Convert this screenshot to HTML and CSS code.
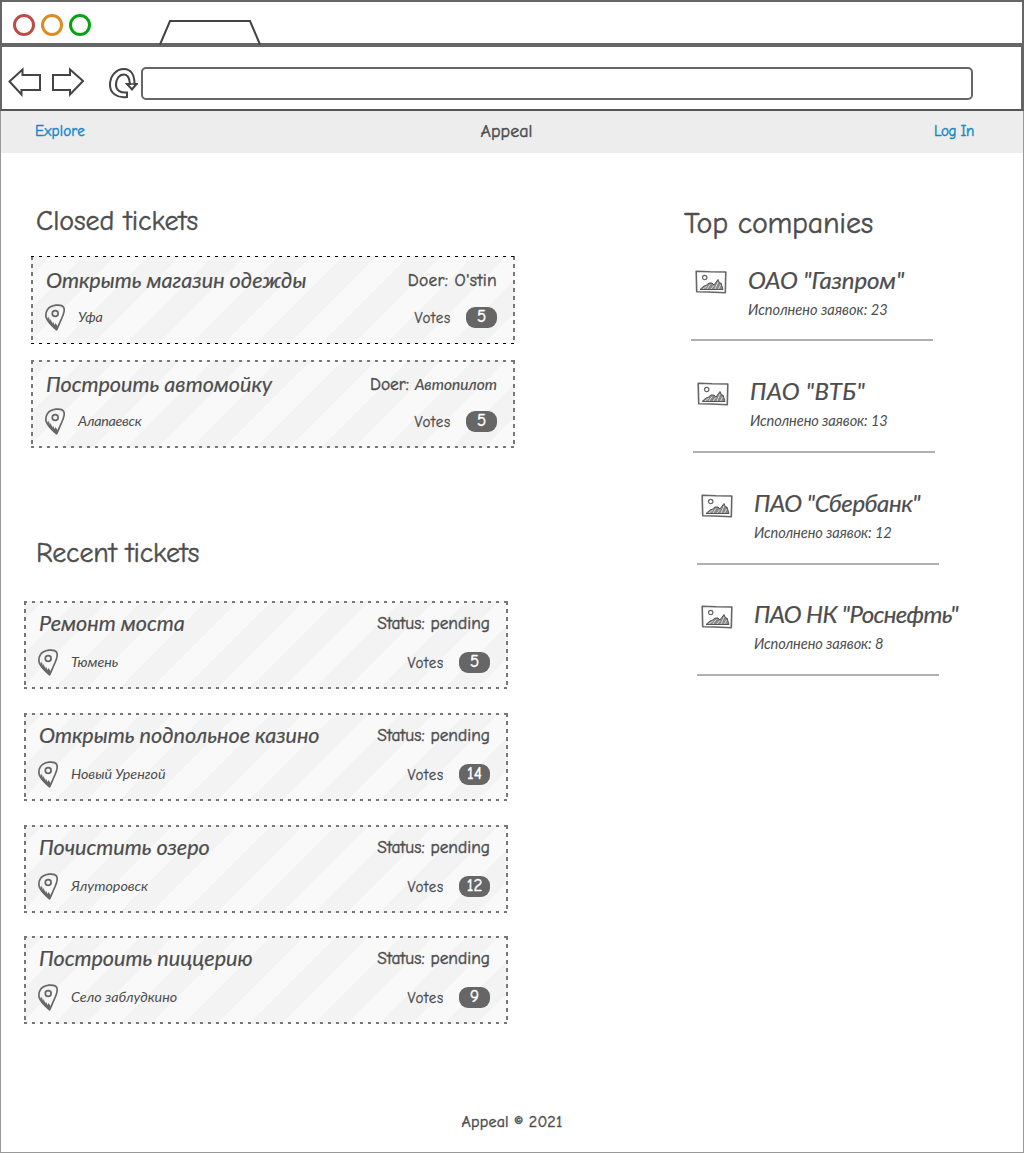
FILE: index.html
```html
<!DOCTYPE html>
<html lang="ru">
<head>
<meta charset="utf-8">
<title>Appeal</title>
<link rel="stylesheet" href="styles.css">
</head>
<body>
<svg class="defs" width="0" height="0">
  <symbol id="pin" viewBox="0 0 20 27">
    <path d="M11 1.200C15 .6 19 1.600 19.200 5C19.600 9 17.500 13 15.500 17C14.200 20 13 23 11.600 25.800C8 22.500 3 19 1.200 13.500C.2 9 1.500 2.500 11 1.200Z" fill="none" stroke="#666" stroke-width="1.700" stroke-linejoin="round"/>
    <circle cx="10.200" cy="9.500" r="2.900" fill="none" stroke="#666" stroke-width="1.700"/>
    <path d="M1.500 12L3 15L3.700 12.500L5 17L5.700 15L7.300 19.500L8 17.500L9.500 21L10.500 19L12.500 22L11.500 25.500C8 22 2.500 18.500 1.500 12Z" fill="#666"/>
  </symbol>
  <symbol id="picture" viewBox="0 0 32 24">
    <path d="M1.200 1.200L15 1.800L30.800 2L30.300 22.700L14 22L1.700 21.800Z" fill="none" stroke="#666" stroke-width="1.600" stroke-linejoin="round"/>
    <circle cx="9.700" cy="7.500" r="2.200" fill="none" stroke="#666" stroke-width="1.200"/>
    <path d="M5 19.500L9 16L11 15.500L14 13L17 13L19 15L23 9.500L24.500 13L26 13L28 19.500Z" fill="#888" stroke="#555" stroke-width="1"/>
    <path d="M8 19L12 16M12 19L15 14.500M16 19L19 15.500M20 19L23 12M23.500 19L25.500 15" stroke="#eee" stroke-width=".8"/>
  </symbol>
</svg>
<div class="window">
  <header class="chrome">
    <div class="tabs">
      <span class="dot red"></span><span class="dot orange"></span><span class="dot green"></span>
      <svg class="tab" width="104" height="26" viewBox="0 0 104 26"><path d="M2 25.500L12 2H92L102 25.500" fill="none" stroke="#444" stroke-width="2"/></svg>
    </div>
    <div class="tools">
      <svg width="76" height="30" viewBox="0 0 76 30" fill="none" stroke="#444" stroke-width="2"><path d="M1.500 14.500L14.500 2.500V8H32V23H13.500V27.500Z"/><path d="M45 8H62V2.500L75 14L62 27.500V23H45Z"/></svg>
      <svg class="reload" width="30" height="32" viewBox="0 0 30 32" fill="none" stroke="#444" stroke-width="2"><path d="M19 30C9 31.500 2 26 2 18C2 9 8 2 16 2C23 2 26.500 8 26.500 17H28.500L24 22.500L19 17H22C21.500 11 20 7.500 16 7.500C11 7.500 8 12 8 18C8 23 12 26 19 25.500Z"/><path d="M18 17H29.500" stroke-width="1.500"/></svg>
      <div class="url"></div>
    </div>
  </header>
  <nav class="nav">
    <a class="link">Explore</a><span class="brand">Appeal</span><a class="link login">Log In</a>
  </nav>
  <main class="main">
    <div class="tickets">
      <section class="closed">
        <h2>Closed tickets</h2>
        <article class="card fine">
          <div class="row top"><h3>Открыть магазин одежды</h3><span class="doer">Doer: O'stin</span></div>
          <div class="row meta"><svg class="pin"><use href="#pin"/></svg><span class="city">Уфа</span><span class="votes">Votes</span><b class="badge">5</b></div>
        </article>
        <article class="card">
          <div class="row top"><h3>Построить автомойку</h3><span class="state">Doer: <i>Автопилот</i></span></div>
          <div class="row meta"><svg class="pin"><use href="#pin"/></svg><span class="city tight">Алапаевск</span><span class="votes">Votes</span><b class="badge">5</b></div>
        </article>
      </section>
      <section class="recent">
        <h2>Recent tickets</h2>
        <article class="card">
          <div class="row top"><h3>Ремонт моста</h3><span class="state">Status: pending</span></div>
          <div class="row meta"><svg class="pin"><use href="#pin"/></svg><span class="city">Тюмень</span><span class="votes">Votes</span><b class="badge">5</b></div>
        </article>
        <article class="card">
          <div class="row top"><h3>Открыть подпольное казино</h3><span class="state">Status: pending</span></div>
          <div class="row meta"><svg class="pin"><use href="#pin"/></svg><span class="city">Новый Уренгой</span><span class="votes">Votes</span><b class="badge">14</b></div>
        </article>
        <article class="card">
          <div class="row top"><h3>Почистить озеро</h3><span class="state">Status: pending</span></div>
          <div class="row meta"><svg class="pin"><use href="#pin"/></svg><span class="city">Ялуторовск</span><span class="votes">Votes</span><b class="badge">12</b></div>
        </article>
        <article class="card last">
          <div class="row top"><h3>Построить пиццерию</h3><span class="state">Status: pending</span></div>
          <div class="row meta"><svg class="pin"><use href="#pin"/></svg><span class="city">Село заблудкино</span><span class="votes">Votes</span><b class="badge">9</b></div>
        </article>
      </section>
    </div>
    <aside class="companies">
      <h2>Top companies</h2>
      <div class="company gazprom"><svg class="pic"><use href="#picture"/></svg><div><h3>ОАО "Газпром"</h3><p>Исполнено заявок: 23</p></div></div>
      <div class="company vtb"><svg class="pic"><use href="#picture"/></svg><div><h3>ПАО "ВТБ"</h3><p>Исполнено заявок: 13</p></div></div>
      <div class="company sber"><svg class="pic"><use href="#picture"/></svg><div><h3>ПАО "Сбербанк"</h3><p>Исполнено заявок: 12</p></div></div>
      <div class="company rosneft"><svg class="pic"><use href="#picture"/></svg><div><h3>ПАО НК "Роснефть"</h3><p>Исполнено заявок: 8</p></div></div>
    </aside>
  </main>
  <footer class="footer">Appeal © 2021</footer>
</div>
</body>
</html>
```
FILE: styles.css
```css
* { box-sizing: border-box; }
body, h2, h3, p { margin: 0; font-weight: 400; }
body {
  background: #fff;
  color: #4d4d4d;
  font-family: "Comic Neue", Lato, sans-serif;
  -webkit-text-stroke: .45px currentColor;
  white-space: nowrap;
}
.defs { display: block; }
.window {
  display: flex;
  flex-direction: column;
  height: 1153px;
  border: solid #999;
  border-width: 0 1px 1px;
}
.chrome {
  height: 111px;
  margin: 0 -1px;
  border: 2px solid #666;
  border-bottom-color: #555;
}
.tabs {
  display: flex;
  gap: 6px;
  height: 45px;
  padding: 12px 0 0 11px;
  border-bottom: 4px solid #666;
}
.dot {
  width: 22px;
  height: 22px;
  border: 3px solid;
  border-radius: 50%;
}
.red { color: #bd4b48; }
.orange { color: #dd8a20; }
.green { color: #04a410; }
.tab { margin: 5px 0 -2px 61px; }
.tools {
  display: flex;
  height: 62px;
  padding: 20px 0 0 6px;
  border-right: 1px solid #666;
}
.reload { margin-left: 24px; }
.url {
  width: 832px;
  height: 33px;
  margin-left: 3px;
  border: 2px solid #666;
  border-radius: 5px;
}
.nav {
  display: grid;
  grid-template-columns: 1fr auto 1fr;
  height: 42px;
  padding: 0 49px 0 34px;
  background: #ededed;
  line-height: 40px;
}
.link {
  color: #1289c9;
  font-size: 15px;
  letter-spacing: .2px;
}
.login { justify-self: end; letter-spacing: -.4px; }
.brand { font-size: 18px; margin-left: 4px; line-height: 41px; }
.main {
  display: grid;
  grid-template-columns: 681px 1fr;
  height: 936px;
}
.tickets, .closed, .recent { display: flex; flex-direction: column; }
h2 { font-size: 28px; line-height: 34px; }
.closed { padding: 51px 0 0 30px; gap: 16px; }
.closed h2 { padding-left: 5px; margin-bottom: 2px; }
.recent { padding: 88px 0 0 23px; gap: 24px; }
.recent h2 { padding-left: 12px; margin-bottom: 7px; letter-spacing: -.15px; }
.card {
  --dash: #777;
  --h: 2px;
  width: 484px;
  height: 88px;
  background:
    repeating-linear-gradient(90deg, var(--dash) 0 3px, transparent 3px 8px) top / 100% var(--h) no-repeat,
    repeating-linear-gradient(90deg, var(--dash) 0 3px, transparent 3px 8px) bottom / 100% var(--h) no-repeat,
    repeating-linear-gradient(#777 0 4px, transparent 4px 8px) left / 2px 100% no-repeat,
    repeating-linear-gradient(#777 0 4px, transparent 4px 8px) right / 2px 100% no-repeat,
    repeating-linear-gradient(135deg, #f3f3f3 0 14px, #f9f9f9 14px 37px, #f3f3f3 37px 46px);
}
.fine { --dash: #000; --h: 1px; }
.last { margin-top: -1px; }
.row { display: flex; align-items: center; padding-right: 18px; }
.top { height: 48px; padding: 0 18px 1px 15px; justify-content: space-between; }
.recent .top { padding-bottom: 4px; }
h3 {
  font-family: Lato, sans-serif;
  font-style: italic;
  font-size: 21.6px;
  line-height: 30px;
  -webkit-text-stroke-width: .2px;
}
.state, .doer { font-size: 17.4px; }
.doer { letter-spacing: .35px; }
.state i {
  font-family: Lato, sans-serif;
  font-size: 15.5px;
  -webkit-text-stroke-width: .2px;
}
.meta { height: 27px; padding-left: 14px; }
.pin { width: 20px; height: 27px; }
.city {
  margin: -2px 0 0 13px;
  font: italic 14.3px Lato, sans-serif;
  -webkit-text-stroke-width: 0;
}
.tight { letter-spacing: -.3px; }
.votes { margin-left: auto; font-size: 15px; letter-spacing: .8px; -webkit-text-stroke-width: .3px; }
.badge {
  width: 31px;
  height: 21px;
  margin-left: 15px;
  border-radius: 9px;
  background: #666;
  color: #fff;
  font-size: 17px;
  font-weight: 400;
  line-height: 20px;
  text-align: center;
}
.companies { display: flex; flex-direction: column; }
.companies h2 { font-size: 30px; margin: 54px 0 15px 2px; letter-spacing: -.25px; }
.company {
  display: flex;
  gap: 21px;
  width: 242px;
  height: 85px;
  margin: 0 0 27px 9px;
  padding: 13px 0 0 4px;
  border-bottom: 2px solid #b0b0b0;
}
.company h3 { font-size: 24px; line-height: 28px; margin-top: -3px; }
.company p {
  font: italic 14.6px/20px Lato, sans-serif;
  margin-top: 6px;
  -webkit-text-stroke-width: 0;
}
.pic { width: 32px; height: 24px; flex: none; margin-top: 1px; }
.vtb { margin-left: 11px; }
.sber, .rosneft { margin-left: 15px; }
.sber { margin-bottom: 26px; }
.gazprom h3 { letter-spacing: -.1px; }
.vtb h3 { letter-spacing: .3px; }
.vtb h3, .sber h3, .rosneft h3 { margin-top: -4px; }
.vtb p, .sber p, .rosneft p { letter-spacing: -.1px; }
.sber h3 { letter-spacing: -.45px; }
.rosneft h3 { letter-spacing: -.65px; }
.footer { text-align: center; font-size: 16px; line-height: 67px; height: 63px; letter-spacing: .2px; }
```
